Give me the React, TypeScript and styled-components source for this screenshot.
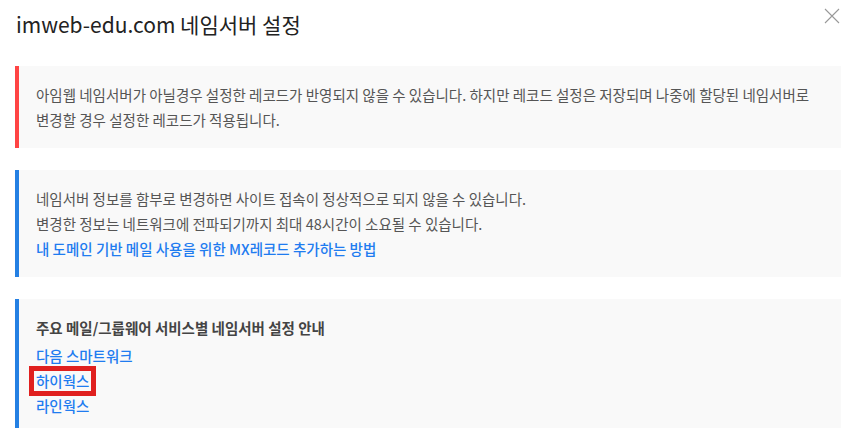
import React from "react";
import styled, { createGlobalStyle } from "styled-components";

const Global = createGlobalStyle`
  html, body { margin: 0; padding: 0; background: #fff; }
  body { font-family: "Noto Sans CJK KR", "Noto Sans", sans-serif; }
  * { box-sizing: border-box; }
`;

const Modal = styled.div`
  width: 852px;
  height: 428px;
  overflow: hidden;
  padding: 0 11px 0 15px;
  position: relative;
`;

const Header = styled.div`
  display: flex;
  align-items: center;
  justify-content: space-between;
  height: 52px;
  padding-left: 1px;
`;

const Title = styled.h1`
  margin: 0;
  font-size: 21px;
  font-weight: 400;
  color: #222;
  letter-spacing: 0;
  margin-top: -4px;
`;

const Close = styled.button`
  position: absolute;
  top: 8px;
  right: 12px;
  width: 16px;
  height: 16px;
  padding: 0;
  border: none;
  background: none;
  cursor: pointer;
`;

const Stack = styled.div`
  display: flex;
  flex-direction: column;
  gap: 22px;
  margin-top: 14px;
`;

const Notice = styled.div<{ $accent: string }>`
  background: #f9f9f9;
  border-left: 4px solid ${(p) => p.$accent};
  padding: 16px 17px;
  font-size: 14.5px;
  line-height: 25px;
  color: #555;
  letter-spacing: 0;
`;

const Line = styled.div``;

const Heading = styled.div`
  font-weight: 700;
  color: #444;
  margin-bottom: 3px;
`;

const LinkText = styled.a`
  display: block;
  color: #1f7cf0;
  font-weight: 500;
  text-decoration: none;
`;

const Highlight = styled.span`
  position: relative;
  &::after {
    content: "";
    position: absolute;
    left: -7px;
    right: -7px;
    top: -4px;
    bottom: -5px;
    border: 5px solid #e0201f;
  }
`;

export default function App() {
  return (
    <>
      <Global />
      <Modal>
        <Header>
          <Title>imweb-edu.com 네임서버 설정</Title>
        </Header>
        <Close aria-label="닫기">
          <svg width="16" height="16" viewBox="0 0 16 16">
            <path d="M1 1L15 15M15 1L1 15" stroke="#999" strokeWidth="1.1" fill="none" />
          </svg>
        </Close>
        <Stack>
          <Notice $accent="#ff4444">
            <Line>
              아임웹 네임서버가 아닐경우 설정한 레코드가 반영되지 않을 수 있습니다. 하지만 레코드 설정은 저장되며 나중에 할당된 네임서버로
            </Line>
            <Line>변경할 경우 설정한 레코드가 적용됩니다.</Line>
          </Notice>
          <Notice $accent="#2480e3">
            <Line>네임서버 정보를 함부로 변경하면 사이트 접속이 정상적으로 되지 않을 수 있습니다.</Line>
            <Line>변경한 정보는 네트워크에 전파되기까지 최대 48시간이 소요될 수 있습니다.</Line>
            <LinkText href="#">내 도메인 기반 메일 사용을 위한 MX레코드 추가하는 방법</LinkText>
          </Notice>
          <Notice $accent="#2480e3">
            <Heading>주요 메일/그룹웨어 서비스별 네임서버 설정 안내</Heading>
            <LinkText href="#">다음 스마트워크</LinkText>
            <LinkText href="#">
              <Highlight>하이웍스</Highlight>
            </LinkText>
            <LinkText href="#">라인웍스</LinkText>
          </Notice>
        </Stack>
      </Modal>
    </>
  );
}
